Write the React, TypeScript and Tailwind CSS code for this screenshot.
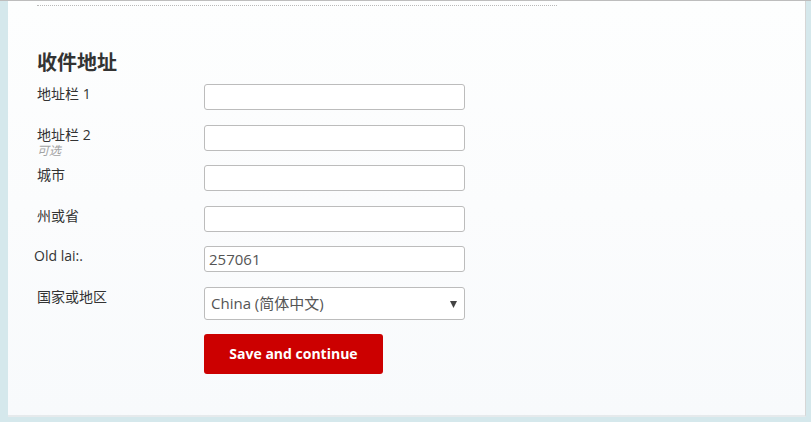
const font = { fontFamily: '"Noto Sans CJK SC", sans-serif' }

interface FieldRowProps {
  label: string
  hint?: string
  value?: string
  labelClass?: string
}

function FieldRow({ label, hint, value, labelClass = '' }: FieldRowProps) {
  return (
    <div className="flex h-[26px] items-start">
      <div className={`w-[167px] shrink-0 pt-[1px] ${labelClass}`}>
        <div className="text-[14px] leading-[17px] text-[#333]">{label}</div>
        {hint && <div className="mt-[1px] text-[12px] leading-[13px] italic text-[#a3a3a3]">{hint}</div>}
      </div>
      <input
        type="text"
        defaultValue={value}
        className="h-[26px] w-[261px] rounded-[3px] border border-[#bcbcbc] bg-white px-[4px] text-[15px] text-[#555] outline-none"
      />
    </div>
  )
}

export default function App() {
  return (
    <div
      className="flex h-[422px] w-[811px] flex-col overflow-hidden border-t border-[#bdbdbd] bg-[#d5e8ec] pb-[5px] pl-[8px] pr-[5px] font-['Open_Sans','Noto_Sans_CJK_SC',sans-serif]"
    >
      <div className="flex-1 border-b-2 border-r border-b-[#e6eaec] border-r-[#d6d6d6] bg-gradient-to-b from-[#fdfefe] via-[#fbfcfd] to-[#f8fafc] pl-[29px]">
        <div className="mt-[4px] w-[520px] border-t border-dotted border-[#b9b9b9]" />

        <h2 className="mt-[42px] text-[20px] font-bold leading-[28px] text-[#333]" style={font}>
          收件地址
        </h2>

        <div className="mt-[8px] flex flex-col gap-y-[14.5px]">
          <FieldRow label="地址栏 1" />
          <FieldRow label="地址栏 2" hint="可选" />
          <FieldRow label="城市" />
          <FieldRow label="州或省" />
          <FieldRow label="Old lai:." value="257061" labelClass="-ml-[3px] mr-[3px]" />

          <div className="flex items-start">
            <div className="w-[167px] shrink-0 pt-[1px] text-[14px] leading-[18px] text-[#333]">国家或地区</div>
            <div className="relative flex h-[33px] w-[261px] items-center rounded-[3px] border border-[#bcbcbc] bg-white pl-[6px] text-[15px] text-[#555]">
              China (简体中文)
              <svg className="absolute right-[7px] top-[13px]" width="7" height="7" viewBox="0 0 7 7">
                <path d="M0 0 H7 L3.5 7 Z" fill="#444" />
              </svg>
            </div>
          </div>
        </div>

        <div className="ml-[167px] mt-[14px]">
          <button className="h-[40px] w-[179px] rounded-[3px] bg-[#cc0000] text-[14px] font-bold text-white">
            Save and continue
          </button>
        </div>
      </div>
    </div>
  )
}
